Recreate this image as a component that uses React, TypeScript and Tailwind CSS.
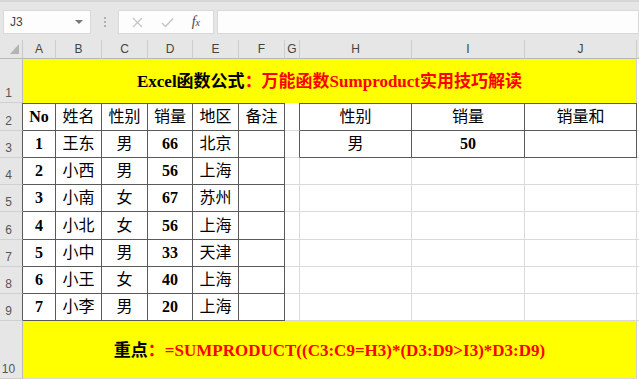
import React from 'react';

const COLS = ['A', 'B', 'C', 'D', 'E', 'F', 'G', 'H', 'I', 'J'];

const ROWS: { n: number; h: string }[] = [
  { n: 1, h: 'h-[44px]' },
  { n: 2, h: 'h-[28px]' },
  { n: 3, h: 'h-[27px]' },
  { n: 4, h: 'h-[27px]' },
  { n: 5, h: 'h-[27px]' },
  { n: 6, h: 'h-[28px]' },
  { n: 7, h: 'h-[27px]' },
  { n: 8, h: 'h-[27px]' },
  { n: 9, h: 'h-[27px]' },
  { n: 10, h: 'h-[58px]' },
];

type Cell = { t: string; b?: boolean };

const data: Record<number, Cell[]> = {
  2: [
    { t: 'No', b: true },
    { t: '姓名' },
    { t: '性别' },
    { t: '销量' },
    { t: '地区' },
    { t: '备注' },
    { t: '' },
    { t: '性别' },
    { t: '销量' },
    { t: '销量和' },
  ],
  3: [
    { t: '1', b: true },
    { t: '王东' },
    { t: '男' },
    { t: '66', b: true },
    { t: '北京' },
    { t: '' },
    { t: '' },
    { t: '男' },
    { t: '50', b: true },
    { t: '' },
  ],
};

const people = [
  ['2', '小西', '男', '56', '上海'],
  ['3', '小南', '女', '67', '苏州'],
  ['4', '小北', '女', '56', '上海'],
  ['5', '小中', '男', '33', '天津'],
  ['6', '小王', '女', '40', '上海'],
  ['7', '小李', '男', '20', '上海'],
];
people.forEach((p, i) => {
  data[i + 4] = [
    { t: p[0], b: true },
    { t: p[1] },
    { t: p[2] },
    { t: p[3], b: true },
    { t: p[4] },
    { t: '' },
    { t: '' },
    { t: '' },
    { t: '' },
    { t: '' },
  ];
});

// cells inside the two bordered tables
const inTable = (r: number, c: number) =>
  (r >= 2 && r <= 9 && c <= 5) || (r >= 2 && r <= 3 && c >= 7 && c <= 9);

const cellCls = (r: number, c: number) => {
  const right = inTable(r, c) || inTable(r, c + 1);
  const bottom = inTable(r, c) || inTable(r + 1, c);
  return [
    right ? 'border-r border-r-[#5a5a5a]' : 'border-r border-r-[#dadada]',
    bottom ? 'border-b border-b-[#5a5a5a]' : 'border-b border-b-[#dadada]',
    r === 2 && inTable(r, c) ? 'border-t border-t-[#5a5a5a]' : '',
  ].join(' ');
};

const grid =
  'grid grid-cols-[23px_33px_46px_46px_45px_46px_46px_15px_112px_113px_112px_1fr]';

const serif = "font-['Liberation_Serif','Noto_Sans_CJK_SC',serif]";

const Toolbar = () => (
  <div className="h-[40px] bg-[#e6e6e6] border-t-2 border-t-[#d6d6d6] flex items-start pt-[8px] pl-[3px]">
    {/* Name box */}
    <div className="w-[88px] h-[24px] bg-[#fdfdfd] border border-[#d9d9d9] flex items-center justify-between pl-[6px] pr-[7px]">
      <span className="text-[12px] text-[#444] font-['Liberation_Sans',sans-serif]">J3</span>
      <span className="w-0 h-0 border-l-[4px] border-r-[4px] border-t-[4px] border-l-transparent border-r-transparent border-t-[#777]" />
    </div>
    <div className="w-[27px] h-[24px] flex flex-col items-center justify-center gap-[2px]">
      <span className="w-[2px] h-[2px] bg-[#b0b0b0]" />
      <span className="w-[2px] h-[2px] bg-[#b0b0b0]" />
      <span className="w-[2px] h-[2px] bg-[#b0b0b0]" />
    </div>
    {/* Formula buttons */}
    <div className="w-[96px] h-[24px] bg-[#fdfdfd] border border-[#d9d9d9] flex items-center justify-around px-[4px]">
      <svg width="11" height="11" viewBox="0 0 11 11" fill="none" stroke="#c4c4c4" strokeWidth="1.2">
        <path d="M1 1 L10 10 M10 1 L1 10" />
      </svg>
      <svg width="13" height="11" viewBox="0 0 13 11" fill="none" stroke="#c4c4c4" strokeWidth="1.4">
        <path d="M1 6 L4.5 9.5 L12 1.5" />
      </svg>
      <span className="text-[14px] italic text-[#444] font-['Liberation_Serif',serif] leading-none">
        f<span className="text-[10px]">x</span>
      </span>
    </div>
    {/* Formula input */}
    <div className="ml-[3px] flex-1 h-[24px] bg-[#fdfdfd] border border-[#d9d9d9]" />
  </div>
);

const App: React.FC = () => {
  return (
    <div className="w-[639px] h-[380px] overflow-hidden bg-white">
      <Toolbar />

      <div className={grid}>
        {/* Column headers */}
        <div className="h-[19px] bg-[#e6e6e6] border-b border-b-[#b8b8b8] border-r border-r-[#c8c8c8] relative">
          <svg className="absolute right-[3px] bottom-[4px]" width="9" height="10" viewBox="0 0 9 10">
            <path d="M9 0 L9 10 L0 10 Z" fill="#b4b4b4" />
          </svg>
        </div>
        {COLS.map((c) => (
          <div
            key={c}
            className="h-[19px] bg-[#e6e6e6] border-b border-b-[#b8b8b8] border-r border-r-[#cdcdcd] flex items-end justify-center pb-[1px] text-[12px] leading-[16px] text-[#444] font-['Liberation_Sans',sans-serif]"
          >
            {c}
          </div>
        ))}
        <div className="h-[19px] bg-[#e6e6e6] border-b border-b-[#b8b8b8]" />

        {ROWS.map(({ n, h }) => {
          const header = (
            <div
              key={`h${n}`}
              className={`${h} bg-[#e6e6e6] border-b border-b-[#d0d0d0] ${
                n >= 2 && n <= 9 ? 'border-r border-r-[#5a5a5a]' : 'border-r border-r-[#bdbdbd]'
              } flex items-end justify-center pr-[5px] pb-[1px] text-[12px] leading-[15px] text-[#555] font-['Liberation_Sans',sans-serif]`}
            >
              {n}
            </div>
          );

          if (n === 1) {
            return (
              <React.Fragment key={n}>
                {header}
                <div className={`${h} col-span-10 bg-[#ffff00] border-r border-r-[#d0d0d0] flex items-center justify-center pt-[2px] text-[17px] font-bold ${serif}`}>
                  <span className="text-black">Excel函数公式</span>
                  <span className="text-[#ff0000]">：万能函数Sumproduct实用技巧解读</span>
                </div>
                <div className={h} />
              </React.Fragment>
            );
          }

          if (n === 10) {
            return (
              <React.Fragment key={n}>
                {header}
                <div className={`${h} col-span-10 bg-[#ffff00] border-r border-r-[#d0d0d0] border-b border-b-[#dadada] flex items-center justify-center pt-[3px] text-[17px] font-bold ${serif}`}>
                  <span className="text-black">重点</span>
                  <span className="text-[#ff0000] whitespace-pre">：=SUMPRODUCT((C3:C9=H3)*(D3:D9&gt;I3)*D3:D9)</span>
                </div>
                <div className={h} />
              </React.Fragment>
            );
          }

          return (
            <React.Fragment key={n}>
              {header}
              {data[n].map((cell, c) => (
                <div
                  key={c}
                  className={`${h} ${cellCls(n, c)} flex items-center justify-center text-[16px] text-black ${serif} ${
                    cell.b ? 'font-bold' : 'font-normal'
                  }`}
                >
                  {cell.t}
                </div>
              ))}
              <div className={`${h} border-b border-b-[#dadada]`} />
            </React.Fragment>
          );
        })}
      </div>
    </div>
  );
};

export default App;
